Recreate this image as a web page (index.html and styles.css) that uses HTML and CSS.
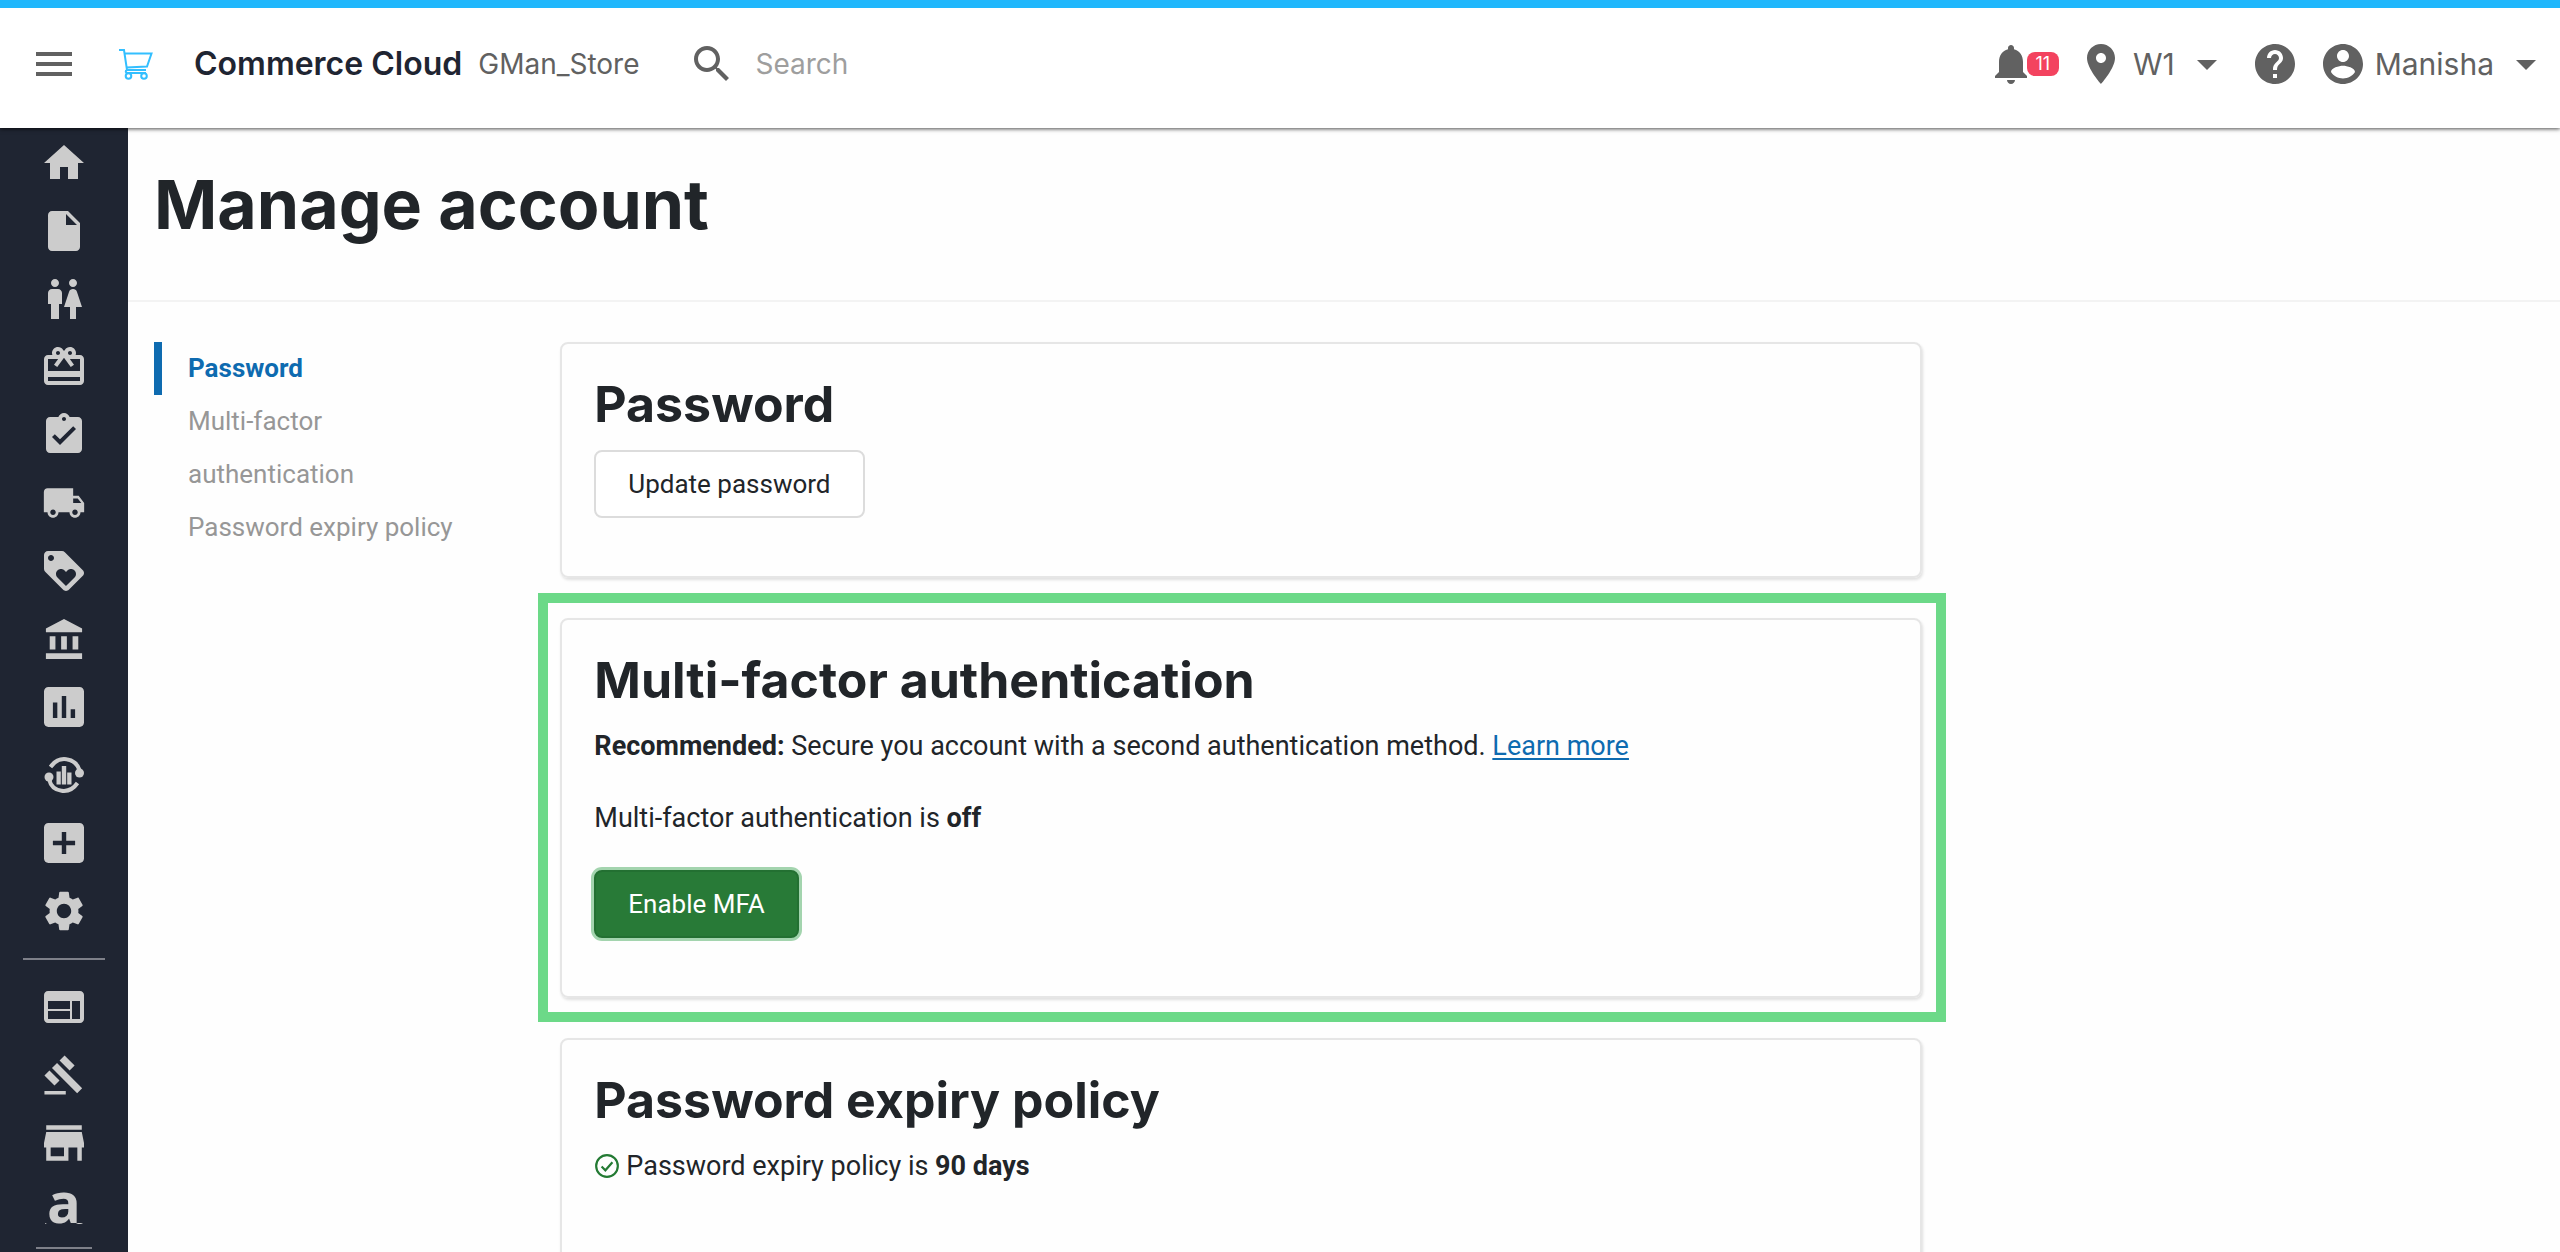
FILE: index.html
```html
<!DOCTYPE html>
<html lang="en">
<head>
    <meta charset="UTF-8">
    <meta name="viewport" content="width=device-width, initial-scale=1.0">
    <title>Manage account - Commerce Cloud</title>
    <link rel="stylesheet" href="styles.css">
</head>
<body>
    <header class="topbar">
        <button type="button" class="icon-btn menu-btn" aria-label="Menu">
            <svg class="icon" viewBox="0 0 24 24"><path d="M3 18h18v-2H3v2zm0-5h18v-2H3v2zm0-7v2h18V6H3z"/></svg>
        </button>
        <a href="#" class="brand">
            <svg class="cart" viewBox="0 0 36 32" aria-hidden="true">
                <path d="M1 2h5l3 20h19M6.500 5.500h27L29 18.500 8.500 19.500M9 22c-2 1-1.500 3 .5 3H28"/>
                <circle cx="10.500" cy="28" r="2.800"/>
                <circle cx="26" cy="28" r="2.800"/>
            </svg>
            <span class="brand-name">Commerce Cloud</span>
        </a>
        <span class="store-name">GMan_Store</span>
        <form class="search">
            <label for="search" aria-label="Search">
                <svg class="icon" viewBox="0 0 24 24"><path d="M15.500 14h-.79l-.28-.27C15.410 12.590 16 11.110 16 9.500 16 5.910 13.090 3 9.500 3S3 5.910 3 9.500 5.910 16 9.500 16c1.610 0 3.090-.59 4.230-1.570l.27.28v.79l5 4.990L20.490 19l-4.990-5zm-6 0C7.010 14 5 11.990 5 9.500S7.010 5 9.500 5 14 7.010 14 9.500 11.990 14 9.500 14z"/></svg>
            </label>
            <input type="text" id="search" placeholder="Search">
        </form>
        <div class="top-actions">
            <button type="button" class="icon-btn notifications" aria-label="Notifications">
                <svg class="icon" viewBox="0 0 24 24"><path d="M12 22c1.100 0 2-.9 2-2h-4c0 1.100.89 2 2 2zm6-6v-5c0-3.070-1.640-5.640-4.500-6.320V4c0-.83-.67-1.500-1.500-1.500s-1.500.67-1.500 1.500v.68C7.630 5.360 6 7.920 6 11v5l-2 2v1h16v-1l-2-2z"/></svg>
                <span class="badge">11</span>
            </button>
            <button type="button" class="icon-btn location">
                <svg class="icon" viewBox="0 0 24 24"><path d="M12 2C8.130 2 5 5.130 5 9c0 5.250 7 13 7 13s7-7.750 7-13c0-3.870-3.130-7-7-7zm0 9.500c-1.380 0-2.500-1.120-2.500-2.500s1.120-2.500 2.500-2.500 2.500 1.120 2.500 2.500-1.120 2.500-2.500 2.500z"/></svg>
                <span class="location-name">W1</span>
                <svg class="icon" viewBox="0 0 24 24"><path d="M7 10l5 5 5-5z"/></svg>
            </button>
            <button type="button" class="icon-btn help" aria-label="Help">
                <svg class="icon" viewBox="0 0 24 24"><path d="M12 2C6.480 2 2 6.480 2 12s4.480 10 10 10 10-4.480 10-10S17.520 2 12 2zm1 17h-2v-2h2v2zm2.070-7.750l-.9.920C13.450 12.900 13 13.500 13 15h-2v-.5c0-1.100.45-2.100 1.170-2.830l1.240-1.260c.37-.36.590-.86.590-1.410 0-1.100-.9-2-2-2s-2 .9-2 2H8c0-2.210 1.790-4 4-4s4 1.790 4 4c0 .88-.36 1.680-.93 2.250z"/></svg>
            </button>
            <button type="button" class="icon-btn account">
                <svg class="icon" viewBox="0 0 24 24"><path d="M12 2C6.480 2 2 6.480 2 12s4.480 10 10 10 10-4.480 10-10S17.520 2 12 2zm0 3c1.660 0 3 1.340 3 3s-1.340 3-3 3-3-1.340-3-3 1.340-3 3-3zm0 14.200c-2.500 0-4.710-1.280-6-3.220.03-1.990 4-3.080 6-3.080 1.990 0 5.970 1.090 6 3.080-1.290 1.940-3.500 3.220-6 3.220z"/></svg>
                <span class="account-name">Manisha</span>
                <svg class="icon" viewBox="0 0 24 24"><path d="M7 10l5 5 5-5z"/></svg>
            </button>
        </div>
    </header>

    <div class="shell">
        <nav class="sidebar" aria-label="Main">
            <a href="#" aria-label="Home"><svg class="icon" viewBox="0 0 24 24"><path d="M10 20v-6h4v6h5v-8h3L12 3 2 12h3v8z"/></svg></a>
            <a href="#" aria-label="Content"><svg class="icon" viewBox="0 0 24 24"><path d="M6 2c-1.100 0-1.990.9-1.990 2L4 20c0 1.100.89 2 1.990 2H18c1.100 0 2-.9 2-2V8l-6-6H6zm7 7V3.500L18.500 9H13z"/></svg></a>
            <a href="#" aria-label="Customers"><svg class="icon" viewBox="0 0 24 24"><path d="M5.500 22v-7.500H4V9c0-1.100.9-2 2-2h3c1.100 0 2 .9 2 2v5.500H9.500V22h-4zM18 22v-6h3l-2.540-7.630C18.180 7.550 17.420 7 16.560 7h-.12c-.86 0-1.630.55-1.900 1.370L12 16h3v6h3zM7.500 6c1.110 0 2-.89 2-2s-.89-2-2-2-2 .89-2 2 .89 2 2 2zm9 0c1.110 0 2-.89 2-2s-.89-2-2-2-2 .89-2 2 .89 2 2 2z"/></svg></a>
            <a href="#" aria-label="Gift cards"><svg class="icon" viewBox="0 0 24 24"><path d="M20 6h-2.180c.11-.31.180-.65.180-1 0-1.660-1.340-3-3-3-1.050 0-1.960.54-2.500 1.350l-.5.670-.5-.68C10.960 2.540 10.050 2 9 2 7.340 2 6 3.340 6 5c0 .35.070.69.180 1H4c-1.110 0-1.990.89-1.990 2L2 19c0 1.110.89 2 2 2h16c1.110 0 2-.89 2-2V8c0-1.110-.89-2-2-2zm-5-2c.55 0 1 .45 1 1s-.45 1-1 1-1-.45-1-1 .45-1 1-1zM9 4c.55 0 1 .45 1 1s-.45 1-1 1-1-.45-1-1 .45-1 1-1zm11 15H4v-2h16v2zm0-5H4V8h5.080L7 10.830 8.620 12 11 8.760l1-1.360 1 1.360L15.380 12 17 10.830 14.920 8H20v6z"/></svg></a>
            <a href="#" aria-label="Orders"><svg class="icon" viewBox="0 0 24 24"><path d="M19 3h-4.180C14.400 1.840 13.300 1 12 1c-1.300 0-2.400.84-2.820 2H5c-1.100 0-2 .9-2 2v14c0 1.100.9 2 2 2h14c1.100 0 2-.9 2-2V5c0-1.100-.9-2-2-2zm-7 0c.55 0 1 .45 1 1s-.45 1-1 1-1-.45-1-1 .45-1 1-1zm-2 14l-4-4 1.410-1.410L10 14.170l6.590-6.590L18 9l-8 8z"/></svg></a>
            <a href="#" aria-label="Shipping"><svg class="icon" viewBox="-1.1 -1.1 26.2 26.2"><path d="M20 8h-3V4H3c-1.100 0-2 .9-2 2v11h2c0 1.660 1.340 3 3 3s3-1.340 3-3h6c0 1.660 1.340 3 3 3s3-1.340 3-3h2v-5l-3-4zM6 18.500c-.83 0-1.500-.67-1.500-1.500s.67-1.500 1.500-1.500 1.500.67 1.500 1.500-.67 1.500-1.500 1.500zm13.500-9l1.960 2.500H17V9.500h2.500zm-1.500 9c-.83 0-1.500-.67-1.500-1.500s.67-1.500 1.500-1.500 1.500.67 1.500 1.500-.67 1.500-1.500 1.500z"/></svg></a>
            <a href="#" aria-label="Loyalty"><svg class="icon" viewBox="0 0 24 24"><path d="M21.410 11.580l-9-9C12.050 2.220 11.550 2 11 2H4c-1.100 0-2 .9-2 2v7c0 .55.220 1.050.59 1.420l9 9c.36.360.86.580 1.410.580s1.050-.22 1.410-.59l7-7c.37-.36.590-.86.590-1.410s-.23-1.060-.59-1.420zM5.500 7C4.670 7 4 6.330 4 5.500S4.670 4 5.500 4 7 4.670 7 5.500 6.330 7 5.500 7zm11.770 8.270L13 19.540l-4.270-4.270C8.280 14.810 8 14.190 8 13.500c0-1.380 1.120-2.500 2.500-2.500.69 0 1.320.28 1.770.74l.73.720.73-.73c.45-.45 1.080-.73 1.770-.73 1.380 0 2.500 1.120 2.500 2.500 0 .69-.28 1.320-.73 1.770z"/></svg></a>
            <a href="#" aria-label="Accounting"><svg class="icon" viewBox="-1.1 -1.1 25.2 25.2"><path d="M4 10v7h3v-7H4zm6 0v7h3v-7h-3zM2 22h19v-3H2v3zm14-12v7h3v-7h-3zm-4.500-9L2 6v2h19V6l-9.500-5z"/></svg></a>
            <a href="#" aria-label="Reports"><svg class="icon" viewBox="1.2 1.2 21.6 21.6"><path d="M19 3H5c-1.100 0-2 .9-2 2v14c0 1.100.9 2 2 2h14c1.100 0 2-.9 2-2V5c0-1.100-.9-2-2-2zM9 17H7v-7h2v7zm4 0h-2V7h2v10zm4 0h-2v-4h2v4z"/></svg></a>
            <a href="#" aria-label="Analytics">
                <svg class="icon" viewBox="0 0 48 48">
                    <path class="ring" d="M10.500 16C15 9.500 21 7.500 26.500 8.300 33 9 38 13.500 39.500 19M37.500 32C33 38.500 27 40.500 21.500 39.700 15 39 10.500 34.500 9 28"/>
                    <circle cx="39.500" cy="22" r="4.500"/>
                    <circle cx="9" cy="26" r="4.500"/>
                    <path d="M16.500 20.500h4.300v13h-4.300zM21.800 15h4.400v18.500h-4.400zM27.200 21.500h4.300v12h-4.300z"/>
                </svg>
            </a>
            <a href="#" aria-label="Add-ons"><svg class="icon" viewBox="1.2 1.2 21.6 21.6"><path d="M19 3H5c-1.110 0-2 .9-2 2v14c0 1.100.89 2 2 2h14c1.100 0 2-.9 2-2V5c0-1.100-.9-2-2-2zm-2 10h-4v4h-2v-4H7v-2h4V7h2v4h4v2z"/></svg></a>
            <a href="#" aria-label="Settings"><svg class="icon" viewBox="0 0 24 24"><path d="M19.140 12.940c.04-.3.060-.61.060-.94 0-.32-.02-.64-.07-.94l2.030-1.580c.18-.14.230-.41.120-.61l-1.920-3.320c-.12-.22-.37-.29-.59-.22l-2.390.96c-.5-.38-1.030-.7-1.620-.94l-.36-2.540c-.04-.24-.24-.41-.48-.41h-3.840c-.24 0-.43.170-.47.410l-.36 2.540c-.59.240-1.130.57-1.620.94l-2.390-.96c-.22-.08-.47 0-.59.220L2.740 8.870c-.12.210-.08.470.12.610l2.030 1.580c-.05.300-.09.630-.09.940s.02.640.07.940l-2.030 1.580c-.18.140-.23.410-.12.610l1.920 3.320c.12.220.37.290.59.220l2.390-.96c.5.380 1.030.7 1.620.94l.36 2.540c.05.240.24.410.48.410h3.840c.24 0 .44-.17.470-.41l.36-2.540c.59-.24 1.130-.56 1.620-.94l2.390.96c.22.080.47 0 .59-.22l1.920-3.320c.12-.22.070-.47-.12-.61l-2.010-1.580zM12 15.600c-1.980 0-3.600-1.620-3.600-3.600s1.620-3.600 3.600-3.600 3.600 1.620 3.600 3.600-1.620 3.600-3.600 3.600z"/></svg></a>
            <hr class="divider">
            <a href="#" aria-label="Web store"><svg class="icon" viewBox="0 0 24 24"><path d="M20 4H4c-1.100 0-1.990.9-1.990 2L2 18c0 1.100.9 2 2 2h16c1.100 0 2-.9 2-2V6c0-1.100-.9-2-2-2zm-5 14H4v-4h11v4zm0-5H4V9h11v4zm5 5h-4V9h4v9z"/></svg></a>
            <a href="#" aria-label="Auctions"><svg class="icon" viewBox="-1.5 -1.5 27 27"><path d="M1 21h12v2H1zM5.245 8.070l2.830-2.827 14.140 14.142-2.828 2.828zM12.317 1l5.657 5.656-2.830 2.830-5.654-5.660zM3.825 9.485l5.657 5.657-2.828 2.828-5.657-5.657z"/></svg></a>
            <a href="#" aria-label="Marketplace"><svg class="icon" viewBox="1.2 1.2 21.6 21.6"><path d="M20 4H4v2h16V4zm1 10v-2l-1-5H4l-1 5v2h1v6h10v-6h4v6h2v-6h1zm-9 4H6v-4h6v4z"/></svg></a>
            <a href="#" class="letter-link" aria-label="Amazon">
                <span class="letter">a</span>
                <svg class="letter-smile" viewBox="0 0 40 2"><path d="M1 0l2 1H1zM32 1c2-1.400 5-1.400 7 0z"/></svg>
            </a>
            <hr class="divider divider-short">
        </nav>

        <main class="content">
            <div class="page-header">
                <h1>Manage account</h1>
            </div>
            <div class="page-grid">
                <nav class="section-nav" aria-label="Account sections">
                    <a href="#password" class="active">Password</a>
                    <a href="#mfa">Multi-factor authentication</a>
                    <a href="#expiry">Password expiry policy</a>
                </nav>
                <div class="cards">
                    <section class="card" id="password">
                        <h2>Password</h2>
                        <button type="button" class="btn btn-default">Update password</button>
                    </section>
                    <section class="card card-highlight" id="mfa">
                        <h2>Multi-factor authentication</h2>
                        <p><strong>Recommended:</strong> Secure you account with a second authentication method. <a href="#">Learn more</a></p>
                        <p>Multi-factor authentication is <strong>off</strong></p>
                        <button type="button" class="btn btn-success">Enable MFA</button>
                    </section>
                    <section class="card" id="expiry">
                        <h2>Password expiry policy</h2>
                        <p class="status">
                            <svg class="check" viewBox="0 0 24 24" aria-hidden="true"><circle cx="12" cy="12" r="10"/><path d="M7 12.500l3.500 3.500 6.500-7.500"/></svg>
                            <span>Password expiry policy is <strong>90 days</strong></span>
                        </p>
                    </section>
                </div>
            </div>
        </main>
    </div>
</body>
</html>
```
FILE: styles.css
```css
* {
    margin: 0;
    padding: 0;
    box-sizing: border-box;
}

body {
    font-family: Roboto, "Liberation Sans", sans-serif;
    font-size: 26px;
    line-height: 40px;
    color: #212529;
    background: #fefefe;
    height: 100vh;
    display: flex;
    flex-direction: column;
    overflow: hidden;
}

button, input {
    font: inherit;
    color: inherit;
}

.icon {
    display: block;
    width: 48px;
    height: 48px;
    flex: none;
    fill: currentColor;
}

/* Top bar */
.topbar {
    display: flex;
    align-items: center;
    flex: none;
    height: 128px;
    padding: 0 10px 8px 30px;
    border-top: 8px solid #20b7fc;
    background: #ffffff;
    box-shadow: 0 1px 4px rgba(0, 0, 0, 0.7);
    position: relative;
    z-index: 1;
    font-family: Inter, "Open Sans", sans-serif;
    font-size: 30px;
    color: #616161;
}

.icon-btn {
    display: flex;
    align-items: center;
    border: none;
    background: none;
    cursor: pointer;
}

.brand {
    display: flex;
    align-items: center;
    gap: 40px;
    margin-left: 40px;
    color: #1f2532;
    text-decoration: none;
}

.cart {
    width: 36px;
    height: 32px;
    fill: none;
    stroke: #33bfff;
    stroke-width: 2;
}

.brand-name {
    font-size: 32px;
    font-weight: 600;
}

.store-name {
    margin-left: 16px;
    font-size: 28px;
}

.search {
    display: flex;
    align-items: center;
    flex: 1;
    gap: 20px;
    margin-left: 48px;
}

.search input {
    flex: 1;
    min-width: 0;
    border: none;
    outline: none;
    background: none;
    font-size: 28px;
}

.search input::placeholder {
    color: #9e9e9e;
    opacity: 1;
}

.top-actions {
    display: flex;
    align-items: center;
}

.badge {
    width: 32px;
    height: 24px;
    margin-left: -8px;
    border-radius: 8px;
    background: #f3435f;
    color: #ffffff;
    font-size: 18px;
    line-height: 24px;
    text-align: center;
}

.location {
    margin-left: 18px;
}

.location-name {
    margin: 0 8px;
}

.help {
    margin-left: 20px;
}

.account {
    margin-left: 20px;
}

.account-name {
    margin: 0 8px;
}

.shell {
    display: flex;
    flex: 1;
    min-height: 0;
}

/* Sidebar */
.sidebar {
    display: flex;
    flex-direction: column;
    align-items: center;
    flex: none;
    gap: 20px;
    width: 128px;
    padding-top: 11px;
    overflow: hidden;
    background: #1f2532;
    color: #cccccc;
}

.sidebar a {
    flex: none;
    color: inherit;
    text-decoration: none;
}

.ring {
    fill: none;
    stroke: currentColor;
    stroke-width: 4;
}

.divider {
    flex: none;
    width: 82px;
    height: 2px;
    margin: 3px 0;
    border: none;
    background: #7e8089;
}

.divider-short {
    width: 56px;
    margin: -8px 0 0;
}

.letter-link {
    display: flex;
    flex-direction: column;
    align-items: center;
    height: 48px;
}

.letter {
    height: 36px;
    font-family: "Open Sans", sans-serif;
    font-size: 56px;
    font-weight: 700;
    line-height: 28px;
}

.letter-smile {
    width: 40px;
    height: 2px;
    fill: currentColor;
}

/* Page */
.content {
    flex: 1;
    min-width: 0;
    overflow-y: auto;
    scrollbar-width: none;
}

.page-header {
    padding: 40px 26px 60px;
    border-bottom: 2px solid #f3f3f3;
}

h1, h2 {
    font-family: Inter, "Open Sans", sans-serif;
    font-weight: 700;
}

h1 {
    font-size: 68px;
    line-height: 72px;
}

h2 {
    margin-bottom: 18px;
    font-size: 50px;
    line-height: 56px;
}

.page-grid {
    display: grid;
    grid-template-columns: minmax(0, 2fr) minmax(0, 7fr) minmax(0, 3fr);
    padding-top: 40px;
}

.section-nav {
    display: flex;
    flex-direction: column;
    padding: 0 32px 0 26px;
}

.section-nav a {
    padding-left: 26px;
    padding-right: 20px;
    border-left: 8px solid transparent;
    color: #979797;
    line-height: 53px;
    text-decoration: none;
}

.section-nav .active {
    border-color: #0e6bb0;
    color: #0e6bb0;
    font-weight: 700;
}

.cards {
    display: flex;
    flex-direction: column;
    gap: 40px;
    padding: 0 30px 40px 27px;
}

.card {
    position: relative;
    padding: 32px 32px 58px;
    border: 2px solid #e6e6e6;
    border-radius: 8px;
    box-shadow: 1px 2px 3px rgba(0, 0, 0, 0.12);
}

.card p {
    margin-bottom: 32px;
    font-size: 27px;
}

.card a {
    color: #0e6bb0;
    text-decoration-thickness: 2px;
    text-underline-offset: 3px;
}

.card-highlight::after {
    content: "";
    position: absolute;
    inset: -27px -26px -26px -24px;
    border: 10px solid #6cd988;
    pointer-events: none;
}

.btn {
    display: block;
    height: 68px;
    padding: 0 32px;
    border-radius: 8px;
    cursor: pointer;
}

.btn-default {
    border: 2px solid #dcdcdc;
    background: #ffffff;
}

.btn-success {
    border: 2px solid #237032;
    background: #287a37;
    color: #ffffff;
    box-shadow: 0 0 0 3px #a3d4ae;
}

.status {
    display: flex;
    align-items: center;
    gap: 6px;
}

.check {
    width: 26px;
    height: 26px;
    fill: none;
    stroke: #237a33;
    stroke-width: 2;
}
```
